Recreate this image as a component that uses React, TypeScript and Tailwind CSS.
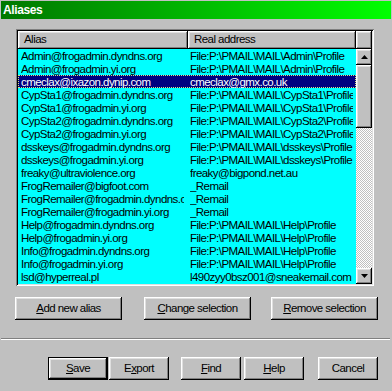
const raised =
  "shadow-[inset_-1px_-1px_#000000,inset_1px_1px_#ffffff,inset_-2px_-2px_#808080,inset_2px_2px_#dfdfdf]";

const rows: [string, string][] = [
  ["Admin@frogadmin.dyndns.org", "File:P:\\PMAIL\\MAIL\\Admin\\Profile"],
  ["Admin@frogadmin.yi.org", "File:P:\\PMAIL\\MAIL\\Admin\\Profile"],
  ["cmeclax@ixazon.dynip.com", "cmeclax@gmx.co.uk"],
  ["CypSta1@frogadmin.dyndns.org", "File:P:\\PMAIL\\MAIL\\CypSta1\\Profile"],
  ["CypSta1@frogadmin.yi.org", "File:P:\\PMAIL\\MAIL\\CypSta1\\Profile"],
  ["CypSta2@frogadmin.dyndns.org", "File:P:\\PMAIL\\MAIL\\CypSta2\\Profile"],
  ["CypSta2@frogadmin.yi.org", "File:P:\\PMAIL\\MAIL\\CypSta2\\Profile"],
  ["dsskeys@frogadmin.dyndns.org", "File:P:\\PMAIL\\MAIL\\dsskeys\\Profile"],
  ["dsskeys@frogadmin.yi.org", "File:P:\\PMAIL\\MAIL\\dsskeys\\Profile"],
  ["freaky@ultraviolence.org", "freaky@bigpond.net.au"],
  ["FrogRemailer@bigfoot.com", "_Remail"],
  ["FrogRemailer@frogadmin.dyndns.org", "_Remail"],
  ["FrogRemailer@frogadmin.yi.org", "_Remail"],
  ["Help@frogadmin.dyndns.org", "File:P:\\PMAIL\\MAIL\\Help\\Profile"],
  ["Help@frogadmin.yi.org", "File:P:\\PMAIL\\MAIL\\Help\\Profile"],
  ["Info@frogadmin.dyndns.org", "File:P:\\PMAIL\\MAIL\\Help\\Profile"],
  ["Info@frogadmin.yi.org", "File:P:\\PMAIL\\MAIL\\Help\\Profile"],
  ["lsd@hyperreal.pl", "l490zyy0bsz001@sneakemail.com"],
];

function Button({
  children,
  className = "",
  isDefault = false,
}: {
  children: React.ReactNode;
  className?: string;
  isDefault?: boolean;
}) {
  return (
    <div className={`h-[23px] ${isDefault ? "border border-black" : ""} ${className}`}>
      <div className={`h-full flex items-center justify-center ${raised}`}>
        <span className="leading-none">{children}</span>
      </div>
    </div>
  );
}

const U = ({ c }: { c: string }) => (
  <span className="underline underline-offset-[1px]">{c}</span>
);

function Arrow({ up }: { up?: boolean }) {
  return (
    <div className={`h-[16px] w-[16px] flex items-center justify-center bg-[#c0c0c0] ${raised}`}>
      <svg width="7" height="4" viewBox="0 0 7 4">
        <polygon points={up ? "3.5,0 7,4 0,4" : "0,0 7,0 3.5,4"} fill="#000" />
      </svg>
    </div>
  );
}

export default function App() {
  return (
    <div className="w-[392px] h-[391px] bg-[#c0c0c0] text-black text-[11.5px] tracking-[-0.55px] font-['Liberation_Sans',Arial,sans-serif] overflow-hidden">
      {/* title bar */}
      <div className="mx-[1px] pt-[1px]">
        <div className="h-[18px] bg-linear-to-r from-[#007800] to-[#00ff00] flex items-center pl-[2px]">
          <span className="text-white font-bold text-[12px] tracking-[-0.4px]">Aliases</span>
        </div>
      </div>

      {/* list view */}
      <div className="mt-[10px] ml-[16px] w-[358px] h-[257px] p-[2px] shadow-[inset_1px_1px_#808080,inset_-1px_-1px_#ffffff,inset_2px_2px_#000000,inset_-2px_-2px_#dfdfdf]">
        <div className="flex h-[18px]">
          <div className={`w-[170px] pl-[6px] flex items-center ${raised}`}>Alias</div>
          <div className={`w-[168px] pl-[6px] flex items-center ${raised}`}>Real address</div>
          <div className={`w-[16px] ${raised}`} />
        </div>
        <div className="flex h-[235px]">
          <div className="w-[338px] bg-[#00ffff] overflow-hidden">
            {rows.map(([alias, real], i) => {
              const sel = i === 2;
              return (
                <div
                  key={i}
                  className={`flex h-[13px] ${
                    sel ? "bg-[#000080] text-white outline outline-1 outline-dotted outline-[#e0e080] -outline-offset-1" : ""
                  }`}
                >
                  <div className="w-[170px] pl-[3px] pr-[4px]">
                    <div className="h-[13px] leading-[15px] whitespace-nowrap [clip-path:inset(-4px_0px_-4px_0px)]">{alias}</div>
                  </div>
                  <div className="w-[168px] pl-[2px] pr-[3px]">
                    <div className="h-[13px] leading-[15px] whitespace-nowrap [clip-path:inset(-4px_0px_-4px_0px)]">{real}</div>
                  </div>
                </div>
              );
            })}
          </div>
          <div className="w-[16px] flex flex-col">
            <Arrow up />
            <div className={`h-[63px] bg-[#c0c0c0] ${raised}`} />
            <div className="flex-1 bg-[image:repeating-conic-gradient(#ffffff_0%_25%,#c0c0c0_0%_50%)] bg-[length:2px_2px]" />
            <Arrow />
          </div>
        </div>
      </div>

      {/* list buttons */}
      <div className="mt-[11px] ml-[15px] flex">
        <Button className="w-[107px]">
          <U c="A" />dd new alias
        </Button>
        <Button className="w-[107px] ml-[22px]">
          <U c="C" />hange selection
        </Button>
        <Button className="w-[107px] ml-[20px]">
          <U c="R" />emove selection
        </Button>
      </div>

      {/* separator */}
      <div className="mt-[18px] mx-[1px] w-[389px]">
        <div className="h-px bg-[#808080]" />
        <div className="h-px bg-white" />
      </div>

      {/* dialog buttons */}
      <div className="mt-[17px] ml-[48px] flex">
        <Button isDefault className="w-[60px]">
          <U c="S" />ave
        </Button>
        <Button className="w-[60px] ml-[1px]">
          E<U c="x" />port
        </Button>
        <Button className="w-[60px] ml-[12px]">
          <U c="F" />ind
        </Button>
        <Button className="w-[60px] ml-[3px]">
          <U c="H" />elp
        </Button>
        <Button className="w-[60px] ml-[14px]">Cancel</Button>
      </div>
    </div>
  );
}
